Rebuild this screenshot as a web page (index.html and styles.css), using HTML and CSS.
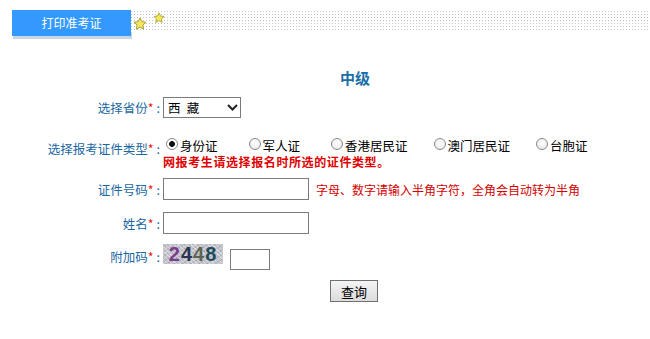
FILE: index.html
```html
<!DOCTYPE html>
<html>
    <head>
        <meta charset="utf-8">
        <title>打印准考证</title>
        <link rel="stylesheet" href="styles.css">
    </head>

    <body>
        <div class="top">
            <div class="tab">打印准考证</div>
            <div class="dots">
                <svg class="star star-big" viewBox="0 0 24 24"><path d="M12 1.5l3.1 6.6 7.2.8-5.4 4.9 1.5 7.1L12 17.3l-6.4 3.6 1.5-7.1-5.4-4.9 7.2-.8z"/></svg>
                <svg class="star star-small" viewBox="0 0 24 24"><path d="M12 1.5l3.1 6.6 7.2.8-5.4 4.9 1.5 7.1L12 17.3l-6.4 3.6 1.5-7.1-5.4-4.9 7.2-.8z"/></svg>
            </div>
        </div>

        <div class="main">
            <div class="title">中级</div>

            <div class="row row-prov">
                <div class="label">选择省份<span class="req">*</span>:</div>
                <div class="field">
                    <span class="select-wrap">
                        <select class="prov"><option>西&ensp;藏</option></select>
                        <svg class="arrow" viewBox="0 0 11 7"><polyline points="1,1 5.5,5.5 10,1"/></svg>
                    </span>
                </div>
            </div>

            <div class="row row-type">
                <div class="label">选择报考证件类型<span class="req">*</span>:</div>
                <div class="field field-col">
                    <div class="radios">
                        <label class="opt"><input type="radio" name="zjlx" checked>身份证</label>
                        <label class="opt"><input type="radio" name="zjlx">军人证</label>
                        <label class="opt opt-wide"><input type="radio" name="zjlx">香港居民证</label>
                        <label class="opt opt-wide"><input type="radio" name="zjlx">澳门居民证</label>
                        <label class="opt"><input type="radio" name="zjlx">台胞证</label>
                    </div>
                    <div class="note">网报考生请选择报名时所选的证件类型。</div>
                </div>
            </div>

            <div class="row row-id">
                <div class="label">证件号码<span class="req">*</span>:</div>
                <div class="field">
                    <input class="text" type="text">
                    <span class="hint">字母、数字请输入半角字符，全角会自动转为半角</span>
                </div>
            </div>

            <div class="row row-name">
                <div class="label">姓名<span class="req">*</span>:</div>
                <div class="field">
                    <input class="text" type="text">
                </div>
            </div>

            <div class="row row-code">
                <div class="label">附加码<span class="req">*</span>:</div>
                <div class="field field-top">
                    <span class="captcha"><span class="d1">2</span><span class="d2">4</span><span class="d3">4</span><span class="d4">8</span></span>
                    <input class="code" type="text">
                </div>
            </div>

            <div class="row-submit">
                <button class="btn">查询</button>
            </div>
        </div>
    </body>
</html>
```

FILE: styles.css
```css
body {
    margin: 0;
    font-family: "Noto Sans CJK SC", sans-serif;
    font-size: 12px;
    color: #000;
    background: #fff;
}

/* header strip */
.top {
    display: flex;
    height: 27px;
    padding: 9px 0 0 12px;
}

.tab {
    flex: none;
    width: 119px;
    height: 26px;
    margin-top: 1px;
    line-height: 26px;
    text-align: center;
    color: #fff;
    font-size: 12px;
    background-color: #3399ff;
    box-shadow: 1px 3px 0 #c6d6e4;
}

.dots {
    flex: 1;
    display: flex;
    align-items: flex-start;
    height: 23px;
    background-image:
        linear-gradient(#fff 2px, transparent 2px),
        linear-gradient(90deg, #c4c4c4 1px, transparent 1px);
    background-size: 3px 3px;
}

.star {
    fill: #f4e760;
    stroke: #a79a2c;
    stroke-width: 1.6;
    stroke-linejoin: round;
}

.star-big {
    width: 14px;
    height: 14px;
    margin: 8px 0 0 2px;
}

.star-small {
    width: 12px;
    height: 12px;
    margin: 3px 0 0 6px;
}

/* form */
.title {
    margin-top: 32px;
    padding-left: 60px;
    line-height: 20px;
    text-align: center;
    font-size: 15px;
    font-weight: bold;
    color: #1a6ea8;
}

.row {
    display: flex;
    align-items: center;
}

.label {
    flex: none;
    width: 160px;
    margin-right: 3px;
    text-align: right;
    color: #1b67a2;
    font-size: 12.5px;
}

.req {
    margin-right: 3px;
    color: #ee1111;
}

.field {
    display: flex;
    align-items: center;
}

.row-prov {
    height: 21px;
    margin-top: 9px;
}

.select-wrap {
    position: relative;
    display: inline-block;
}

.prov {
    appearance: none;
    -webkit-appearance: none;
    display: block;
    width: 78px;
    height: 21px;
    padding: 0 0 0 4px;
    border: 1px solid #7a7a7a;
    border-radius: 0;
    background: #fff;
    font-family: inherit;
    font-size: 12.5px;
    color: #000;
}

.arrow {
    position: absolute;
    right: 3px;
    top: 7px;
    width: 11px;
    height: 7px;
    fill: none;
    stroke: #222;
    stroke-width: 2;
}

.row-type {
    height: 34px;
    margin-top: 18px;
}

.row-type .label {
    padding-bottom: 10px;
}

.field-col {
    flex-direction: column;
    align-items: flex-start;
}

.radios {
    display: flex;
    align-items: center;
    height: 18px;
    font-size: 12.5px;
}

.opt {
    display: flex;
    align-items: center;
    margin-right: 31px;
}

.opt:first-child {
    margin-left: 3px;
}

.opt-wide {
    margin-right: 26px;
}

.opt input {
    appearance: none;
    -webkit-appearance: none;
    box-sizing: border-box;
    width: 12px;
    height: 12px;
    margin: -3px 2px 0 0;
    border: 1px solid #8a8a8a;
    border-radius: 50%;
    background: radial-gradient(circle at 50% 40%, #fff, #e4e4e4);
}

.opt input:checked {
    background: radial-gradient(circle, #111 0 2.6px, #fff 3.2px);
}

.note {
    line-height: 16px;
    color: #e00000;
    font-weight: bold;
    letter-spacing: 0.6px;
}

.row-id {
    height: 22px;
    margin-top: 8px;
}

.row-name {
    height: 22px;
    margin-top: 12px;
}

.text {
    box-sizing: border-box;
    width: 146px;
    height: 22px;
    margin: 0;
    border: 1px solid #7b7b7b;
    background: #fff;
}

.hint {
    margin-left: 7px;
    color: #d40000;
}

.row-code {
    height: 25px;
    margin-top: 10px;
}

.field-top {
    align-items: flex-start;
    height: 25px;
}

.captcha {
    display: inline-block;
    width: 60px;
    height: 20px;
    line-height: 20px;
    text-align: center;
    font-family: "Liberation Sans", sans-serif;
    font-size: 20px;
    font-weight: bold;
    letter-spacing: 1px;
    background-color: #c3c3cb;
    background-image:
        repeating-linear-gradient(45deg, rgba(255,255,255,0.35) 0 1px, transparent 1px 3px),
        repeating-linear-gradient(-30deg, rgba(120,120,140,0.3) 0 1px, transparent 1px 4px);
}

.d1 { color: #7b3d8c; }
.d2 { color: #2b3452; }
.d3 { color: #5d6452; }
.d4 { color: #214b58; }

.code {
    box-sizing: border-box;
    width: 40px;
    height: 21px;
    margin: 5px 0 0 7px;
    border: 1px solid #7b7b7b;
    background: #fff;
}

.row-submit {
    margin-top: 11px;
    padding-left: 330px;
}

.btn {
    box-sizing: border-box;
    width: 48px;
    height: 22px;
    padding: 0;
    border: 1px solid #707070;
    border-radius: 0;
    background: linear-gradient(#f4f4f4, #dcdcdc);
    font-family: inherit;
    font-size: 13px;
    color: #000;
}
```
